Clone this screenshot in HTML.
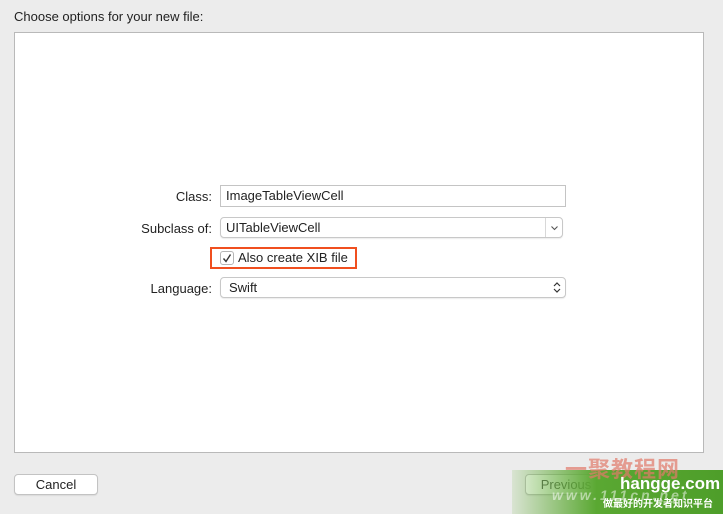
<!DOCTYPE html>
<html><head><meta charset="utf-8"><style>
*{margin:0;padding:0;box-sizing:border-box}
html,body{width:723px;height:514px;overflow:hidden}
body{background:#ececec;font-family:"Liberation Sans","Noto Sans CJK SC",sans-serif;font-size:13px;color:#222;position:relative}
.abs{position:absolute;white-space:nowrap}
.panel{left:14px;top:32px;width:690px;height:421px;background:#fff;border:1px solid #b9b9b9}
.lbl{width:200px;text-align:right;left:12px}
.field{background:#fff;border:1px solid #c4c4c4;padding-left:5px;line-height:20px}
.pop{background:#fff;border:1px solid #c8c8c8;border-radius:4px;box-shadow:0 1px 1px rgba(0,0,0,.08);line-height:19px}
.btn{background:#fff;border:1px solid #c3c3c3;border-radius:4px;text-align:center;line-height:19px;box-shadow:0 1px 1px rgba(0,0,0,.08);font-size:13px}
</style></head><body>
<div class="abs" style="left:14px;top:9px">Choose options for your new file:</div>
<div class="abs panel"></div>

<div class="abs lbl" style="top:189px">Class:</div>
<div class="abs field" style="left:220px;top:185px;width:346px;height:22px">ImageTableViewCell</div>

<div class="abs lbl" style="top:221px">Subclass of:</div>
<div class="abs pop" style="left:220px;top:217px;width:343px;height:21px;padding-left:5px">UITableViewCell
<div class="abs" style="right:0;top:0;width:17px;height:19px;border-left:1px solid #d8d8d8"><svg width="17" height="19"><path d="M5.5 8.5l3 3 3-3" fill="none" stroke="#555" stroke-width="1.1"/></svg></div></div>

<div class="abs" style="left:210px;top:247px;width:147px;height:22px;border:2px solid #f04f1f"></div>
<div class="abs" style="left:220px;top:251px;width:14px;height:14px;border:1px solid #b5b5b5;border-radius:3px;background:#fff"><svg width="12" height="12"><path d="M2.5 6.5l2.5 3 4.5-7" fill="none" stroke="#333" stroke-width="1.4"/></svg></div>
<div class="abs" style="left:238px;top:250px">Also create XIB file</div>

<div class="abs lbl" style="top:281px">Language:</div>
<div class="abs pop" style="left:220px;top:277px;width:346px;height:21px;padding-left:8px">Swift
<svg class="abs" style="right:3px;top:2px" width="10" height="15"><path d="M2 6l3-3 3 3M2 9l3 3 3-3" fill="none" stroke="#333" stroke-width="1.2"/></svg></div>

<div class="abs btn" style="left:14px;top:474px;width:84px;height:21px">Cancel</div>
<div class="abs btn" style="left:525px;top:474px;width:82px;height:21px;color:#555">Previous</div>

<div class="abs" style="left:512px;top:470px;width:211px;height:44px;background:linear-gradient(90deg,rgba(110,180,60,.15),#5aa832 40%,#4e9e2a);"></div>
<div class="abs" style="left:565px;top:452px;font-size:22px;font-weight:bold;color:#e27a6a;opacity:.7;letter-spacing:1px">一聚教程网</div>
<div class="abs" style="left:620px;top:474px;font-size:17px;font-weight:bold;color:#fff">hangge.com</div>
<div class="abs" style="left:552px;top:487px;font-size:14px;font-weight:bold;font-style:italic;color:rgba(255,255,255,.5);letter-spacing:3px">www.111cn.net</div>
<div class="abs" style="left:603px;top:499px;font-size:10px;line-height:12px;color:#fff;font-weight:bold">做最好的开发者知识平台</div>
</body></html>
